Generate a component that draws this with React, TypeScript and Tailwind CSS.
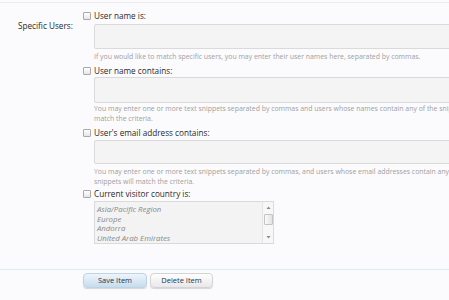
import React from "react";

function Box() {
  return (
    <span className="inline-block w-[8px] h-[8px] border border-[#a9a9a9] bg-gradient-to-b from-[#ffffff] to-[#e6e6e6] rounded-[1px] shrink-0" />
  );
}

function CheckRow({ label, className }: { label: string; className?: string }) {
  return (
    <div className={"flex items-center h-[10px] gap-[3px] " + (className ?? "")}>
      <Box />
      <span className="text-[8.2px] leading-[10px] text-[#2a2a2a] whitespace-nowrap">{label}</span>
    </div>
  );
}

function Area({ className }: { className?: string }) {
  return (
    <div
      className={
        "ml-[11px] w-[380px] bg-[#f4f4f4] border border-[#dadada] rounded-[2px] " + (className ?? "")
      }
    />
  );
}

export default function App() {
  return (
    <div
      className="w-[449px] h-[300px] overflow-hidden bg-[#fbfbfd] flex flex-col"
      style={{ fontFamily: '"Open Sans", "Liberation Sans", sans-serif' }}
    >
      <div className="h-[3px] border-b border-[#ececef] shrink-0" />
      <div className="flex shrink-0">
        <div className="w-[83px] shrink-0 pl-[18px] pt-[8px]">
          <span className="text-[8.2px] leading-[10px] text-[#2a2a2a] whitespace-nowrap">Specific Users:</span>
        </div>
        <div className="flex flex-col pt-[8px] shrink-0">
          <CheckRow label="User name is:" />
          <Area className="mt-[3px] h-[25px]" />
          <div className="ml-[11px] mt-[3px] text-[6.9px] leading-[10px] text-[#a0a0a0] whitespace-nowrap">
            If you would like to match specific users, you may enter their user names here, separated by commas.
          </div>

          <CheckRow label="User name contains:" className="mt-[4px]" />
          <Area className="mt-[1px] h-[26px]" />
          <div className="ml-[11px] mt-[1px] text-[6.9px] leading-[10px] text-[#a0a0a0] whitespace-nowrap">
            You may enter one or more text snippets separated by commas and users whose names contain any of the snippets will
            <br />
            match the criteria.
          </div>

          <CheckRow label="User's email address contains:" className="mt-[4px]" />
          <Area className="mt-[2px] h-[24px]" />
          <div className="ml-[11px] mt-[3px] text-[6.9px] leading-[9.5px] text-[#a0a0a0] whitespace-nowrap">
            You may enter one or more text snippets separated by commas, and users whose email addresses contain any of the
            <br />
            snippets will match the criteria.
          </div>

          <CheckRow label="Current visitor country is:" className="mt-[3px]" />
          <div className="ml-[11px] mt-[2px] w-[180px] h-[43px] bg-[#f3f3f3] border border-[#dadada] flex">
            <div className="flex-1 pl-[2px] pt-[3px] text-[7.8px] leading-[9.5px] italic text-[#8a8a8a] whitespace-nowrap">
              <div>Asia/Pacific Region</div>
              <div>Europe</div>
              <div>Andorra</div>
              <div>United Arab Emirates</div>
            </div>
            <div className="w-[11px] border-l border-[#e4e4e4] bg-[#f7f7f7] flex flex-col items-center">
              <svg width="7" height="8" viewBox="0 0 7 8" className="mt-[2px]">
                <path d="M1.5 5 L3.5 2.5 L5.5 5 Z" fill="#888" />
              </svg>
              <div className="mt-[2px] w-[9px] h-[11px] border border-[#c4c4c4] bg-gradient-to-r from-[#fafafa] to-[#e2e2e2] rounded-[1px]" />
              <div className="flex-1" />
              <svg width="7" height="8" viewBox="0 0 7 8" className="mb-[2px]">
                <path d="M1.5 3 L3.5 5.5 L5.5 3 Z" fill="#888" />
              </svg>
            </div>
          </div>
        </div>
      </div>
      <div className="mt-[25px] border-t border-[#dcecef] shrink-0" />
      <div className="flex gap-[3px] pl-[83px] mt-[3px]">
        <button className="w-[64px] h-[15px] rounded-[4px] border border-[#bfd3e3] bg-gradient-to-b from-[#eef5fb] to-[#c6dcee] shadow-[0_1px_1px_rgba(0,0,0,0.15)] text-[7.5px] leading-[13px] text-[#253547]">
          Save Item
        </button>
        <button className="w-[63px] h-[15px] rounded-[4px] border border-[#d4d4d4] bg-gradient-to-b from-[#ffffff] to-[#e8e8ea] shadow-[0_1px_1px_rgba(0,0,0,0.15)] text-[7.5px] leading-[13px] text-[#253547]">
          Delete Item
        </button>
      </div>
    </div>
  );
}
